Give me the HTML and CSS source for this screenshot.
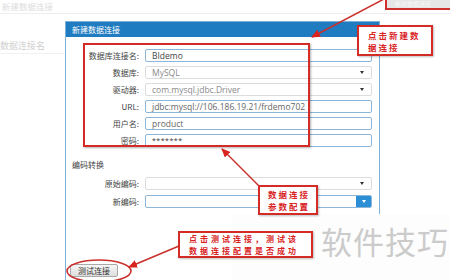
FILE: index.html
```html
<!DOCTYPE html>
<html>
<head>
<title>新建数据连接</title>
<link rel="stylesheet" href="styles.css">
</head>
<body>
<div class="page">
  <div class="bg-top">
    <span class="bg-title">新建数据连接</span>
  </div>
  <div class="bg-row">
    <span class="bg-label">数据连接名</span>
  </div>

  <div class="dialog">
    <div class="dlg-head">新建数据连接</div>
    <div class="dlg-body">
      <div class="form">
        <label>数据库连接名:</label><div class="field blue dark">BIdemo</div>
        <label>数据库:</label><div class="field gray">MySQL<span class="caret"></span></div>
        <label>驱动器:</label><div class="field gray">com.mysql.jdbc.Driver<span class="caret"></span></div>
        <label>URL:</label><div class="field blue">jdbc:mysql://106.186.19.21/frdemo702</div>
        <label>用户名:</label><div class="field blue">product</div>
        <label>密码:</label><div class="field blue pwd">*******</div>
      </div>
      <div class="section">编码转换</div>
      <div class="form loose">
        <label>原始编码:</label><div class="field gray"><span class="caret"></span></div>
        <label>新编码:</label><div class="field blue"><span class="drop-btn"><span class="caret white"></span></span></div>
      </div>
      <button class="test-btn">测试连接</button>
    </div>
  </div>

  <div class="top-btn">新建数据连接</div>
  <div class="mark-rect"></div>

  <svg class="arrows" width="450" height="280" viewBox="0 0 450 280">
    <defs>
      <marker id="ah" markerUnits="userSpaceOnUse" markerWidth="9" markerHeight="8" refX="8" refY="4" orient="auto">
        <path d="M0,0 L9,4 L0,8 z" fill="#d8231f"/>
      </marker>
    </defs>
    <line x1="384" y1="-1" x2="312" y2="37" stroke="#c9302c" stroke-width="1.5" marker-end="url(#ah)"/>
    <line x1="260" y1="187" x2="222" y2="149" stroke="#c9302c" stroke-width="1.5" marker-end="url(#ah)"/>
    <line x1="179" y1="246" x2="129" y2="267" stroke="#c9302c" stroke-width="1.5" marker-end="url(#ah)"/>
    <ellipse cx="99" cy="271" rx="32" ry="11" fill="none" stroke="#c9302c" stroke-width="1.6"/>
  </svg>

  <div class="watermark">软件技巧</div>

  <div class="note note-new">点击新建数<br>据连接</div>
  <div class="note note-param">数据连接<br>参数配置</div>
  <div class="note note-test">点击测试连接，测试该<br>数据连接配置是否成功</div>
</div>
</body>
</html>
```

FILE: styles.css
```css
body {
  margin: 0;
  background: #ffffff;
  font-family: "Noto Sans CJK SC", "Noto Sans", sans-serif;
}

.page {
  position: relative;
  width: 450px;
  height: 280px;
  overflow: hidden;
  background: #ffffff;
}

/* faded page behind the dialog */
.bg-top {
  height: 13px;
  border-bottom: 1px solid #eeeeee;
  padding-left: 2px;
}

.bg-title {
  display: block;
  font-size: 8.5px;
  line-height: 12px;
  color: #dcdcdc;
}

.bg-row {
  margin-top: 25px;
  width: 65px;
  height: 14px;
  border-bottom: 1px solid #f1f1f1;
}

.bg-label {
  display: block;
  font-size: 9px;
  line-height: 14px;
  color: #cfcfcf;
}

/* dialog */
.dialog {
  position: absolute;
  left: 65px;
  top: 21px;
  width: 315px;
  height: 262px;
  box-sizing: border-box;
  border: 1px solid #7fb0d8;
  background: #ffffff;
  display: flex;
  flex-direction: column;
}

.dlg-head {
  height: 15px;
  background: #1f7cc0;
  color: #ffffff;
  font-size: 8px;
  line-height: 16px;
  padding-left: 6px;
}

.dlg-body {
  flex: 1;
  display: flex;
  flex-direction: column;
  padding: 12px 7px 5px 0;
}

.form {
  display: grid;
  grid-template-columns: 73px 227px;
  column-gap: 6px;
  row-gap: 4px;
  align-items: center;
}

.form.loose {
  margin-top: 6px;
  row-gap: 5px;
}

.form label {
  text-align: right;
  font-size: 8px;
  color: #444444;
  line-height: 13px;
}

.field {
  position: relative;
  height: 13px;
  box-sizing: border-box;
  border: 1px solid #8cb6d9;
  border-radius: 2px;
  padding-left: 6px;
  font-family: "Open Sans", "Noto Sans", sans-serif;
  font-size: 8.5px;
  line-height: 11px;
  color: #666666;
  white-space: nowrap;
  overflow: hidden;
}

.field.gray {
  border-color: #dcdcdc;
  color: #8a8a8a;
}

.field.dark {
  color: #444444;
}

.field.pwd {
  color: #333333;
  font-size: 7px;
  letter-spacing: 0.5px;
}

.caret {
  position: absolute;
  right: 7px;
  top: 4px;
  width: 0;
  height: 0;
  border-left: 2.5px solid transparent;
  border-right: 2.5px solid transparent;
  border-top: 3px solid #333333;
}

.caret.white {
  border-top-color: #ffffff;
  right: 5px;
  top: 4px;
}

.drop-btn {
  position: absolute;
  right: 0;
  top: 0;
  width: 15px;
  height: 11px;
  background: #2b8fd6;
}

.section {
  margin-top: 12px;
  padding-left: 6px;
  font-size: 8px;
  line-height: 12px;
  color: #444444;
}

.test-btn {
  margin-top: auto;
  margin-left: 4px;
  width: 48px;
  height: 13px;
  padding: 0;
  border: 1px solid #a9a9a9;
  border-radius: 2px;
  background: linear-gradient(#f6f6f6, #dedede);
  font-family: "Noto Sans CJK SC", sans-serif;
  font-size: 8px;
  line-height: 11px;
  color: #333333;
}

/* annotations */
.top-btn {
  position: absolute;
  left: 385px;
  top: 0;
  width: 65px;
  height: 10px;
  box-sizing: border-box;
  background: #e6e6e6;
  border-left: 2px solid #d0302c;
  border-bottom: 2px solid #d0302c;
  font-size: 6px;
  line-height: 8px;
  color: #f8f8f8;
  padding-left: 8px;
}

.mark-rect {
  position: absolute;
  left: 83px;
  top: 43px;
  width: 227px;
  height: 104px;
  box-sizing: border-box;
  border: 2px solid #d42b27;
  box-shadow: 1px 1px 2px rgba(0, 0, 0, 0.3);
}

.arrows {
  position: absolute;
  left: 0;
  top: 0;
}

.watermark {
  position: absolute;
  left: 232px;
  top: 214px;
  width: 218px;
  height: 66px;
  box-sizing: border-box;
  background: #fdfdfd;
  padding: 9px 0 0 89px;
  font-size: 31px;
  line-height: 36px;
  letter-spacing: 1px;
  color: #cbcbcb;
}

.note {
  position: absolute;
  box-sizing: border-box;
  background: #ffffff;
  border: 2px solid #d42b27;
  box-shadow: 1px 1px 2px rgba(0, 0, 0, 0.25);
  color: #d8231f;
  font-weight: bold;
  font-size: 8.5px;
  line-height: 12.4px;
  letter-spacing: 2px;
}

.note-new {
  left: 357px;
  top: 25px;
  width: 76px;
  height: 31px;
  padding: 2px 0 0 9px;
}

.note-param {
  left: 258px;
  top: 185px;
  width: 60px;
  height: 30px;
  padding: 1px 0 0 8px;
}

.note-test {
  left: 178px;
  top: 231px;
  width: 135px;
  height: 27px;
  padding: 0 0 0 9px;
  font-size: 8px;
  line-height: 11.6px;
  letter-spacing: 3px;
}
```
